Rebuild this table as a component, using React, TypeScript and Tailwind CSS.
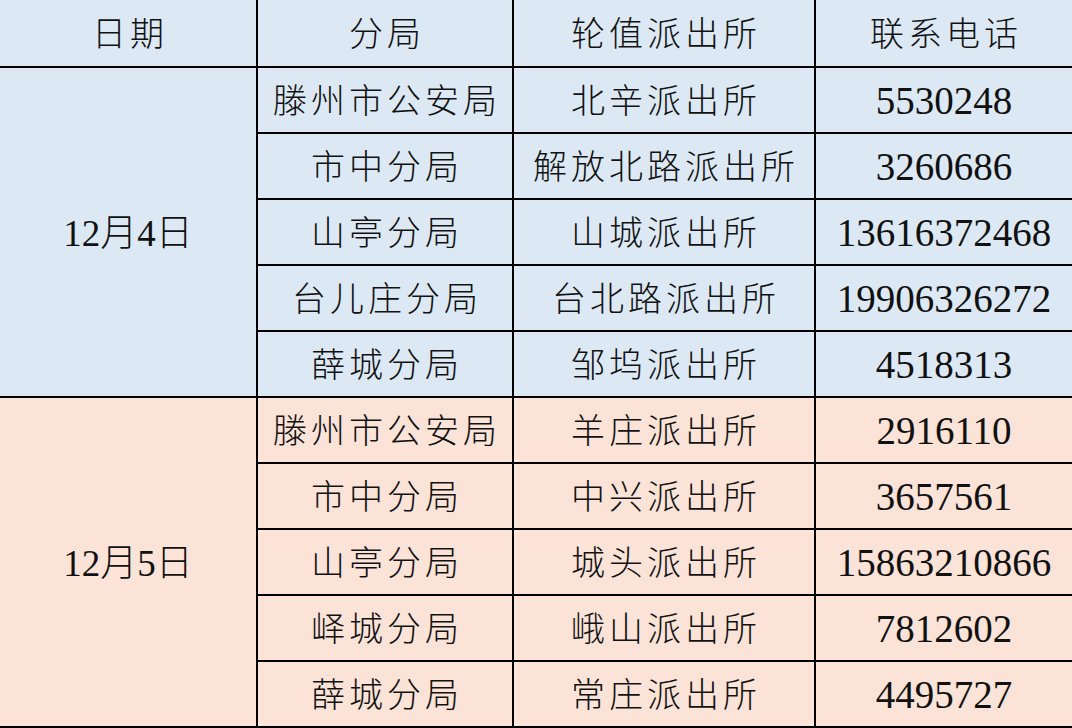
const groups = [
  {
    date: "12月4日",
    bg: "bg-[#dce9f5]",
    rows: [
      ["滕州市公安局", "北辛派出所", "5530248"],
      ["市中分局", "解放北路派出所", "3260686"],
      ["山亭分局", "山城派出所", "13616372468"],
      ["台儿庄分局", "台北路派出所", "19906326272"],
      ["薛城分局", "邹坞派出所", "4518313"],
    ],
  },
  {
    date: "12月5日",
    bg: "bg-[#fce3d8]",
    rows: [
      ["滕州市公安局", "羊庄派出所", "2916110"],
      ["市中分局", "中兴派出所", "3657561"],
      ["山亭分局", "城头派出所", "15863210866"],
      ["峄城分局", "峨山派出所", "7812602"],
      ["薛城分局", "常庄派出所", "4495727"],
    ],
  },
];

// cells: black bottom rule, centred text, nudged down a touch like the source
const cell = "border-b-2 border-black text-center align-middle pt-[3px] pb-0 px-0";

export default function App() {
  return (
    <div
      className="w-[1072px] h-[728px] overflow-hidden bg-[#dce9f5] text-[#111]"
      style={{ fontFamily: '"Liberation Serif", "Noto Sans CJK SC", serif' }}
    >
      <table className="w-full table-fixed border-collapse">
        <colgroup>
          <col className="w-[257px]" />
          <col className="w-[256px]" />
          <col className="w-[302px]" />
          <col />
        </colgroup>
        <thead>
          <tr className="h-[67px] bg-[#dce9f5] text-[34px] tracking-[4px]">
            <th className={`${cell} border-r-2 font-light pl-[4px]`}>日期</th>
            <th className={`${cell} border-r-2 font-light pl-[4px]`}>分局</th>
            <th className={`${cell} border-r-2 font-light pl-[4px]`}>轮值派出所</th>
            <th className={`${cell} font-light pl-[4px]`}>联系电话</th>
          </tr>
        </thead>
        <tbody>
          {groups.map((g) =>
            g.rows.map((r, i) => (
              <tr key={g.date + i} className={`h-[66px] ${g.bg} font-light`}>
                {i === 0 && (
                  <td rowSpan={5} className={`${cell} border-r-2 text-[37px]`}>
                    {g.date}
                  </td>
                )}
                <td className={`${cell} border-r-2 text-[34px] tracking-[4px] pl-[4px]`}>{r[0]}</td>
                <td className={`${cell} border-r-2 text-[34px] tracking-[4px] pl-[4px]`}>{r[1]}</td>
                <td className={`${cell} text-[39px]`}>{r[2]}</td>
              </tr>
            ))
          )}
        </tbody>
      </table>
    </div>
  );
}
